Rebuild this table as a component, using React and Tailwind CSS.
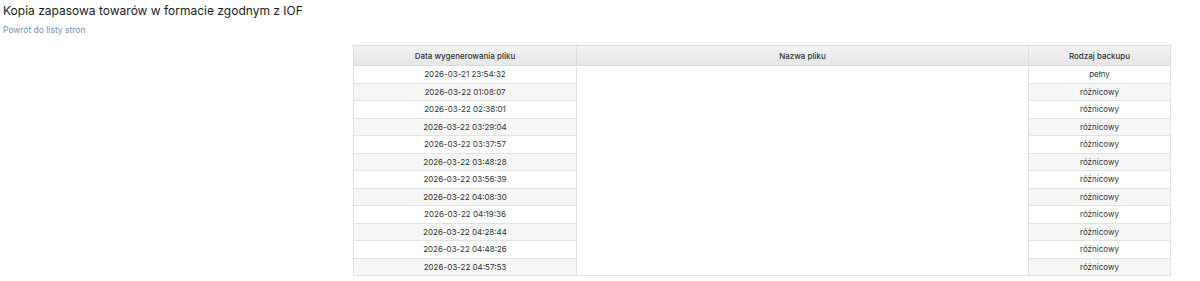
import React from "react";

const rows = [
  ["2026-03-21 23:54:32", "pełny"],
  ["2026-03-22 01:08:07", "różnicowy"],
  ["2026-03-22 02:38:01", "różnicowy"],
  ["2026-03-22 03:29:04", "różnicowy"],
  ["2026-03-22 03:37:57", "różnicowy"],
  ["2026-03-22 03:48:28", "różnicowy"],
  ["2026-03-22 03:56:39", "różnicowy"],
  ["2026-03-22 04:08:30", "różnicowy"],
  ["2026-03-22 04:19:36", "różnicowy"],
  ["2026-03-22 04:28:44", "różnicowy"],
  ["2026-03-22 04:48:26", "różnicowy"],
  ["2026-03-22 04:57:53", "różnicowy"],
];

export default function App() {
  return (
    <div className="w-[1200px] h-[281px] bg-white text-[#333]" style={{ fontFamily: "Inter, 'Noto Sans', sans-serif" }}>
      <div className="pl-[3px] pt-[2px]">
        <h1 className="text-[12px] leading-[18px] text-[#1a1a1a] font-normal">Kopia zapasowa towarów w formacie zgodnym z IOF</h1>
        <a className="block mt-[4px] text-[8.5px] leading-[12px] text-[#6b93c4]">Powrót do listy stron</a>
      </div>
      <div className="flex justify-end pr-[29px] mt-[9px]">
        <table className="w-[817px] border-collapse text-[8px] table-fixed">
          <colgroup>
            <col className="w-[223px]" />
            <col className="w-[452px]" />
            <col className="w-[142px]" />
          </colgroup>
          <thead>
            <tr className="h-[20px] bg-gradient-to-b from-[#f3f3f3] to-[#e6e6e6]">
              <th className="border border-[#dcdcdc] font-medium text-center text-[#333]">Data wygenerowania pliku</th>
              <th className="border border-[#dcdcdc] font-medium text-center text-[#333]">Nazwa pliku</th>
              <th className="border border-[#dcdcdc] font-medium text-center text-[#333]">Rodzaj backupu</th>
            </tr>
          </thead>
          <tbody>
            {rows.map((r, i) => (
              <tr key={i} className={`h-[17.5px] ${i % 2 === 1 ? "bg-[#f6f6f6]" : "bg-white"}`}>
                <td className="border border-[#e2e2e2] text-center p-0">{r[0]}</td>
                {i === 0 && <td rowSpan={rows.length} className="border border-[#e2e2e2] bg-white"></td>}
                <td className="border border-[#e2e2e2] text-center p-0">{r[1]}</td>
              </tr>
            ))}
          </tbody>
        </table>
      </div>
    </div>
  );
}
